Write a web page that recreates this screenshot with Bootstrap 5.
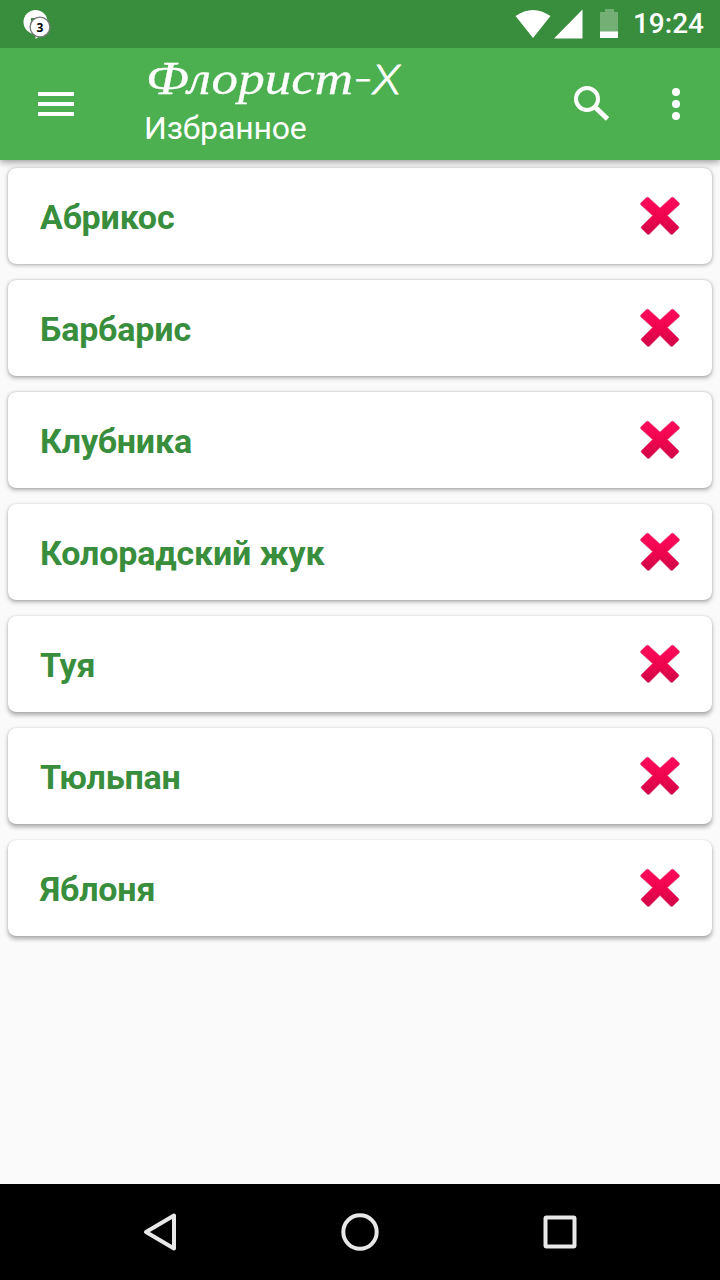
<!DOCTYPE html>
<html lang="ru">
<head>
<meta charset="utf-8">
<meta name="viewport" content="width=device-width, initial-scale=1">
<title>Флорист-X</title>
<link href="https://cdn.jsdelivr.net/npm/bootstrap@5.3.0/dist/css/bootstrap.min.css" rel="stylesheet">
<style>
body{font-family:Roboto,"Noto Sans",sans-serif;background:#fafafa;height:1280px;overflow:hidden}
svg{display:block;flex:none}
.status{height:48px;background:#388e3c;padding:0 16px 0 23px;z-index:2}
.clock{font-size:28px;font-weight:500;line-height:48px;margin-left:14px}
.appbar{height:112px;background:#4caf50;box-shadow:0 2px 7px rgba(0,0,0,.4);padding:0 40px 0 38px;z-index:1}
.titles{margin-left:70px}
.sub{font-size:32px;line-height:36px;letter-spacing:-.15px}
.items{gap:16px;padding:8px 8px 0}
.plant{height:96px;border:0;border-radius:8px;padding:0 32px;font-size:34px;font-weight:700;letter-spacing:-.17px;color:#388e3c;box-shadow:0 var(--dy) 4px rgba(0,0,0,.32),0 0 1px rgba(0,0,0,.25)}
.plant>div{line-height:40px;padding-top:1px}
.navkeys{height:96px;background:#000;gap:162px}
</style>
</head>
<body class="d-flex flex-column">
<svg width="0" height="0" class="position-absolute"><defs>
<linearGradient id="red" x1="0" y1="0" x2="0" y2="1"><stop offset="0" stop-color="#ff0a5c"/><stop offset=".5" stop-color="#f0054f"/><stop offset="1" stop-color="#d00545"/></linearGradient>
<symbol id="cross" viewBox="0 0 40 40"><path d="M8.500 1.500 20 12 31.500 1.500Q32.500 .8 33.500 1.500L39.300 7Q40 8 39 9L27.500 19.500 38.500 30.500Q39.300 31.500 38.500 32.500L32.500 38.300Q31.500 39 30.500 38L20 27.500 9.500 38Q8.500 39 7.500 38.300L1.500 32.500Q.7 31.500 1.500 30.500L12.500 19.500 1 9Q0 8 .7 7L6.500 1.500Q7.500 .8 8.500 1.500Z" fill="url(#red)" stroke="#d8457b" stroke-opacity=".55"/></symbol>
</defs></svg>
<header class="status position-relative d-flex align-items-center text-white flex-shrink-0">
<svg width="30" height="48" viewBox="22.500 0 30 48"><circle cx="35" cy="22" r="12" fill="#fff"/><path d="M30.500 18h5v3l-4 7-1-3z" fill="#388e3c"/><path d="M35 36v3l3-2z" fill="#fff"/><circle cx="39.500" cy="27" r="9.900" fill="#fff" stroke="#777" stroke-width="1.300"/><text x="39.500" y="31.500" text-anchor="middle" font-family="Open Sans,sans-serif" font-weight="700" font-size="12">3</text></svg>
<svg class="ms-auto" width="104" height="48" viewBox="515 0 104 48" fill="#fff"><path d="M515.500 16Q533 4 550.500 16L533 38ZM582.500 9.500V38.500H554Z"/><path d="M605 9h9v3h4v26h-18V12h5z" opacity=".3"/><path d="M600 31.500h18V38h-18z"/></svg>
<div class="clock">19:24</div>
</header>
<nav class="appbar d-flex position-relative text-white flex-shrink-0">
<svg width="36" height="112" fill="#fff"><path d="M0 44h36v4H0zM0 54h36v4H0zM0 64h36v4H0z"/></svg>
<div class="titles">
<svg width="270" height="62" viewBox="144 48 270 62" fill="#fff" stroke="#fff"><text x="146" y="93.500" font-family="Liberation Serif,serif" font-style="italic" font-size="46" stroke-width=".3" textLength="207" lengthAdjust="spacingAndGlyphs">Флорист</text><text x="353" y="92" font-family="Lato,sans-serif" font-size="40" font-weight="300" stroke-width=".9" textLength="20" lengthAdjust="spacingAndGlyphs">-</text><text x="373" y="93.500" font-family="Lato,sans-serif" font-style="italic" font-size="41" font-weight="300" stroke-width="1" textLength="27" lengthAdjust="spacingAndGlyphs">X</text></svg>
<div class="sub">Избранное</div></div>
<svg class="ms-auto" width="36" height="112" viewBox="573 48 36 112" fill="none" stroke="#fff"><circle cx="587" cy="99" r="11" stroke-width="4"/><path d="m596 108 11.500 11" stroke-width="5"/></svg>
<svg style="margin-left:63px" width="8" height="112" fill="#fff"><circle cx="4" cy="44" r="4"/><circle cx="4" cy="56" r="4"/><circle cx="4" cy="68" r="4"/></svg>
</nav>
<main class="items d-flex flex-column flex-grow-1">
<div class="card plant flex-row align-items-center justify-content-between" style="--dy:1px"><div>Абрикос</div><svg width="40" height="40"><use href="#cross"/></svg></div>
<div class="card plant flex-row align-items-center justify-content-between" style="--dy:1.3px"><div>Барбарис</div><svg width="40" height="40"><use href="#cross"/></svg></div>
<div class="card plant flex-row align-items-center justify-content-between" style="--dy:1.6px"><div>Клубника</div><svg width="40" height="40"><use href="#cross"/></svg></div>
<div class="card plant flex-row align-items-center justify-content-between" style="--dy:2px"><div>Колорадский жук</div><svg width="40" height="40"><use href="#cross"/></svg></div>
<div class="card plant flex-row align-items-center justify-content-between" style="--dy:2.3px"><div>Туя</div><svg width="40" height="40"><use href="#cross"/></svg></div>
<div class="card plant flex-row align-items-center justify-content-between" style="--dy:2.600px"><div>Тюльпан</div><svg width="40" height="40"><use href="#cross"/></svg></div>
<div class="card plant flex-row align-items-center justify-content-between" style="--dy:3px"><div>Яблоня</div><svg width="40" height="40"><use href="#cross"/></svg></div>
</main>
<footer class="navkeys d-flex align-items-center justify-content-center flex-shrink-0">
<svg width="38" height="40" fill="none" stroke="#e8e8e8" stroke-width="4" stroke-linejoin="round"><path d="M5 20 33 3.500V36.500Z"/></svg>
<svg width="38" height="40" fill="none" stroke="#e8e8e8" stroke-width="4"><circle cx="19" cy="20" r="16.700"/></svg>
<svg width="38" height="40" fill="none" stroke="#e8e8e8" stroke-width="4"><rect x="4.500" y="5.500" width="29" height="29" rx="1"/></svg>
</footer>
<script src="https://cdn.jsdelivr.net/npm/bootstrap@5.3.0/dist/js/bootstrap.bundle.min.js"></script>
</body>
</html>
